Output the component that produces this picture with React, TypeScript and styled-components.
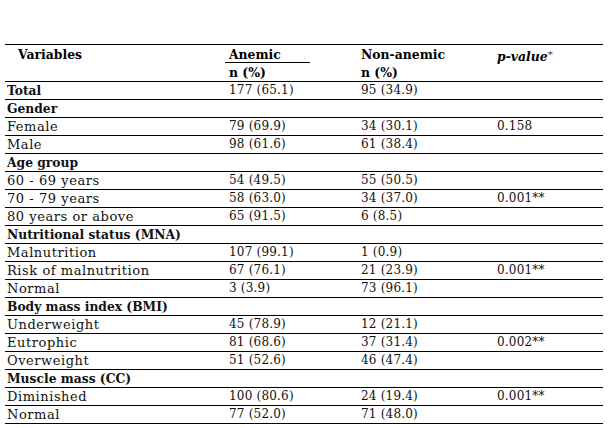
import React from "react";
import styled, { createGlobalStyle } from "styled-components";

const Global = createGlobalStyle`
  html, body { margin: 0; padding: 0; background: #fff; }
  body { font-family: "DejaVu Serif", "Liberation Serif", serif; color: #000; }
`;

const Page = styled.div`
  width: 611px;
  height: 428px;
  padding: 44px 0 0 5px;
  box-sizing: border-box;
`;

const Table = styled.table`
  width: 598px;
  border-collapse: collapse;
  table-layout: fixed;
  border-top: 1px solid #000;
  font-size: 12px;
`;

const Col = styled.col<{ $w: number }>`
  width: ${(p) => p.$w}px;
`;

const HeadCell = styled.th<{ $indent?: number }>`
  text-align: left;
  vertical-align: top;
  font-weight: bold;
  font-size: 12.4px;
  padding: 3px 0 0 ${(p) => p.$indent ?? 6}px;
  height: 15px;
  line-height: 14px;
`;

const SubHeadCell = styled.th`
  text-align: left;
  font-weight: bold;
  font-size: 12.4px;
  padding: 0 0 0 6px;
  height: 17px;
  line-height: 17px;
  border-bottom: 1px solid #000;
`;

const Underlined = styled.span`
  display: block;
  width: 81px;
  margin-left: -4px;
  padding-left: 4px;
  border-bottom: 1px solid #000;
`;

const PValueHead = styled.span`
  font-style: italic;
`;

const Star = styled.span`
  font-weight: normal;
  font-size: 10px;
  vertical-align: 3px;
  color: #333;
`;

const Row = styled.tr`
  border-bottom: 1px solid #000;
`;

const Cell = styled.td<{ $first?: boolean; $bold?: boolean }>`
  height: 17px;
  padding: 0 0 0 ${(p) => (p.$first ? 2 : 6)}px;
  line-height: 17px;
  vertical-align: bottom;
  white-space: nowrap;
  color: #111;
  font-size: ${(p) => (p.$first && !p.$bold ? "13px" : p.$bold ? "12.3px" : "12px")};
  font-weight: ${(p) => (p.$bold ? "bold" : "normal")};
  letter-spacing: ${(p) => (p.$first && !p.$bold ? "0.55px" : p.$first ? "0" : "0.2px")};
`;

type R = { label: string; a?: string; n?: string; p?: string; group?: boolean };

const rows: R[] = [
  { label: "Total", a: "177 (65.1)", n: "95 (34.9)", group: true },
  { label: "Gender", group: true },
  { label: "Female", a: "79 (69.9)", n: "34 (30.1)", p: "0.158" },
  { label: "Male", a: "98 (61.6)", n: "61 (38.4)" },
  { label: "Age group", group: true },
  { label: "60 - 69 years", a: "54 (49.5)", n: "55 (50.5)" },
  { label: "70 - 79 years", a: "58 (63.0)", n: "34 (37.0)", p: "0.001**" },
  { label: "80 years or above", a: "65 (91.5)", n: "6 (8.5)" },
  { label: "Nutritional status (MNA)", group: true },
  { label: "Malnutrition", a: "107 (99.1)", n: "1 (0.9)" },
  { label: "Risk of malnutrition", a: "67 (76.1)", n: "21 (23.9)", p: "0.001**" },
  { label: "Normal", a: "3 (3.9)", n: "73 (96.1)" },
  { label: "Body mass index (BMI)", group: true },
  { label: "Underweight", a: "45 (78.9)", n: "12 (21.1)" },
  { label: "Eutrophic", a: "81 (68.6)", n: "37 (31.4)", p: "0.002**" },
  { label: "Overweight", a: "51 (52.6)", n: "46 (47.4)" },
  { label: "Muscle mass (CC)", group: true },
  { label: "Diminished", a: "100 (80.6)", n: "24 (19.4)", p: "0.001**" },
  { label: "Normal", a: "77 (52.0)", n: "71 (48.0)" },
];

export default function App() {
  return (
    <Page>
      <Global />
      <Table>
        <colgroup>
          <Col $w={218} />
          <Col $w={132} />
          <Col $w={136} />
          <Col $w={112} />
        </colgroup>
        <thead>
          <tr>
            <HeadCell $indent={13}>Variables</HeadCell>
            <HeadCell>
              <Underlined>Anemic</Underlined>
            </HeadCell>
            <HeadCell>Non-anemic</HeadCell>
            <HeadCell>
              <PValueHead>p-value</PValueHead>
              <Star>*</Star>
            </HeadCell>
          </tr>
          <tr>
            <SubHeadCell />
            <SubHeadCell>n (%)</SubHeadCell>
            <SubHeadCell>n (%)</SubHeadCell>
            <SubHeadCell />
          </tr>
        </thead>
        <tbody>
          {rows.map((r, i) => (
            <Row key={i}>
              <Cell $first $bold={r.group}>{r.label}</Cell>
              <Cell>{r.a ?? ""}</Cell>
              <Cell>{r.n ?? ""}</Cell>
              <Cell>{r.p ?? ""}</Cell>
            </Row>
          ))}
        </tbody>
      </Table>
    </Page>
  );
}
